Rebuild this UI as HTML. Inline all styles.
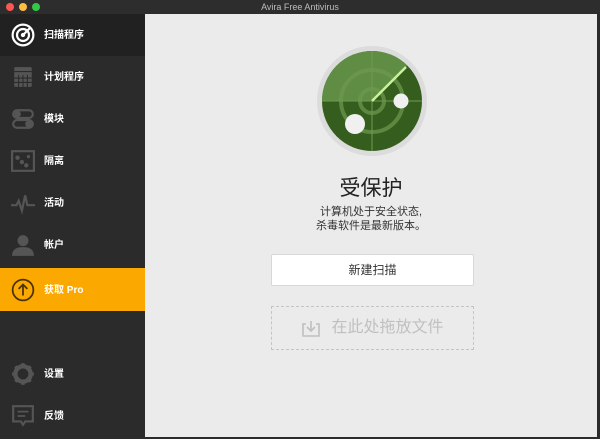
<!DOCTYPE html>
<html><head><meta charset="utf-8"><style>
*{margin:0;padding:0;box-sizing:border-box}
body{width:600px;height:437px;background:#2b2b2b;position:relative;overflow:hidden;font-family:"Liberation Sans","Noto Sans CJK SC",sans-serif}
.tb{position:absolute;left:0;top:0;width:600px;height:14px;background:#2d2d2d;color:#bdbdbd;font-size:9px;text-align:center;line-height:14px}
.dot{position:absolute;top:3px;width:8px;height:8px;border-radius:50%}
.side{position:absolute;left:0;top:14px;width:145px;height:423px;background:#2b2b2b}
.it{position:absolute;left:0;width:145px;height:42px;color:#fff;font-size:10px;font-weight:bold;line-height:44px;padding-left:44px}
.ic{position:absolute;left:11px;top:9px;width:24px;height:24px}
.main{position:absolute;left:145px;top:14px;width:452px;height:423px;background:#ebebeb}
.rb{position:absolute;right:0;top:14px;width:3px;height:423px;background:#2b2b2b}
</style></head><body>
<div class="tb">Avira Free Antivirus
<div class="dot" style="left:6px;background:#fc5753"></div>
<div class="dot" style="left:19px;background:#fdbc40"></div>
<div class="dot" style="left:32px;background:#33c748"></div>
</div>
<div class="side">
<div class="it" style="top:0;background:#212121">扫描程序
<svg class="ic" viewBox="0 0 22 22"><circle cx="11" cy="11" r="9.5" fill="none" stroke="#fff" stroke-width="2"/><circle cx="11" cy="11" r="5.5" fill="none" stroke="#fff" stroke-width="2"/><circle cx="11" cy="11" r="2" fill="#fff"/><path d="M11 11L18 4" stroke="#fff" stroke-width="2"/></svg></div>
<div class="it" style="top:42px">计划程序
<svg class="ic" viewBox="0 0 22 22"><rect x="3" y="2" width="16" height="18" rx="1" fill="#555"/><path d="M3 6h16M7 9v11M11 9v11M15 9v11M3 12h16M3 16h16" stroke="#2b2b2b" stroke-width="1"/></svg></div>
<div class="it" style="top:84px">模块
<svg class="ic" viewBox="0 0 22 22"><rect x="2" y="3" width="18" height="7" rx="3.5" fill="none" stroke="#555" stroke-width="2"/><rect x="2" y="12" width="18" height="7" rx="3.5" fill="none" stroke="#555" stroke-width="2"/><circle cx="6" cy="6.5" r="3" fill="#555"/><circle cx="16" cy="15.5" r="3" fill="#555"/></svg></div>
<div class="it" style="top:126px">隔离
<svg class="ic" viewBox="0 0 22 22"><rect x="1" y="2" width="20" height="18" fill="none" stroke="#555" stroke-width="2"/><circle cx="6" cy="8" r="2" fill="#555"/><circle cx="10" cy="12" r="2" fill="#555"/><circle cx="14" cy="15" r="2" fill="#555"/><circle cx="16" cy="7" r="1.5" fill="#555"/></svg></div>
<div class="it" style="top:168px">活动
<svg class="ic" viewBox="0 0 22 22"><path d="M0 13h5l2-4 3 9 3-14 2 9h7" fill="none" stroke="#555" stroke-width="2"/></svg></div>
<div class="it" style="top:210px">帐户
<svg class="ic" viewBox="0 0 22 22"><circle cx="11" cy="7" r="5" fill="#555"/><path d="M1 21c0-6 4-8 10-8s10 2 10 8z" fill="#555"/></svg></div>
<div class="it" style="top:254px;background:#fba800;height:43px;line-height:45px">获取 Pro
<svg class="ic" viewBox="0 0 22 22" style="top:10px"><circle cx="11" cy="11" r="9.5" fill="none" stroke="#4a3200" stroke-width="1.6"/><path d="M11 16V6M7 10l4-4 4 4" fill="none" stroke="#4a3200" stroke-width="1.6"/></svg></div>
<div class="it" style="top:339px">设置
<svg class="ic" viewBox="0 0 22 22"><circle cx="11" cy="11" r="7" fill="none" stroke="#555" stroke-width="4"/><path d="M11 1v5M11 16v5M1 11h5M16 11h5M4 4l3.5 3.5M14.5 14.5L18 18M18 4l-3.5 3.5M7.5 14.5L4 18" stroke="#555" stroke-width="3"/></svg></div>
<div class="it" style="top:381px">反馈
<svg class="ic" viewBox="0 0 22 22"><path d="M2 2h18v14h-7l-2 3-2-3H2z" fill="none" stroke="#555" stroke-width="2"/><path d="M6 7h10M6 11h7" stroke="#555" stroke-width="1.6"/></svg></div>
</div>
<div class="main">
<svg style="position:absolute;left:172px;top:32px" width="110" height="110" viewBox="0 0 110 110">
<defs><clipPath id="c"><circle cx="55" cy="55" r="50"/></clipPath></defs>
<circle cx="55" cy="55" r="55" fill="#dcdcdc"/>
<circle cx="55" cy="55" r="50" fill="#355e1e"/>
<g clip-path="url(#c)">
<path d="M55 55L0 55A55 55 0 0 1 94 16z" fill="#5f8d43"/>
<circle cx="55" cy="55" r="31" fill="none" stroke="#6f9a50" stroke-width="4" opacity=".7"/>
<circle cx="55" cy="55" r="12" fill="none" stroke="#6f9a50" stroke-width="4" opacity=".7"/>
<path d="M55 0v110M0 55h110" stroke="#6f9a50" stroke-width="1.5" opacity=".7"/>
</g>
<path d="M55 55L89 21" stroke="#c9f29a" stroke-width="2.5"/>
<circle cx="84" cy="55" r="7.5" fill="#f0f0f0"/>
<circle cx="38" cy="78" r="10" fill="#f0f0f0"/>
</svg>
<div style="position:absolute;left:0;width:452px;top:158px;text-align:center;font-size:21px;color:#222">受保护</div>
<div style="position:absolute;left:0;width:452px;top:191px;text-align:center;font-size:11px;line-height:14px;color:#333">计算机处于安全状态,<br>杀毒软件是最新版本。</div>
<div style="position:absolute;left:126px;top:240px;width:203px;height:32px;background:#fff;border:1px solid #d8d8d8;border-radius:2px;text-align:center;line-height:30px;font-size:12px;color:#333">新建扫描</div>
<div style="position:absolute;left:126px;top:292px;width:203px;height:44px;border:1.5px dashed #c4c4c4;text-align:center;line-height:41px;font-size:16px;color:#c0c0c0">
<svg style="position:absolute;left:30px;top:13px" width="18" height="17" viewBox="0 0 18 17"><path d="M4 4H1v12h16V4h-3M9 1v10M5 7l4 4 4-4" fill="none" stroke="#c0c0c0" stroke-width="1.6"/></svg>
<span style="margin-left:30px">在此处拖放文件</span></div>
</div>
<div class="rb"></div>
</body></html>
